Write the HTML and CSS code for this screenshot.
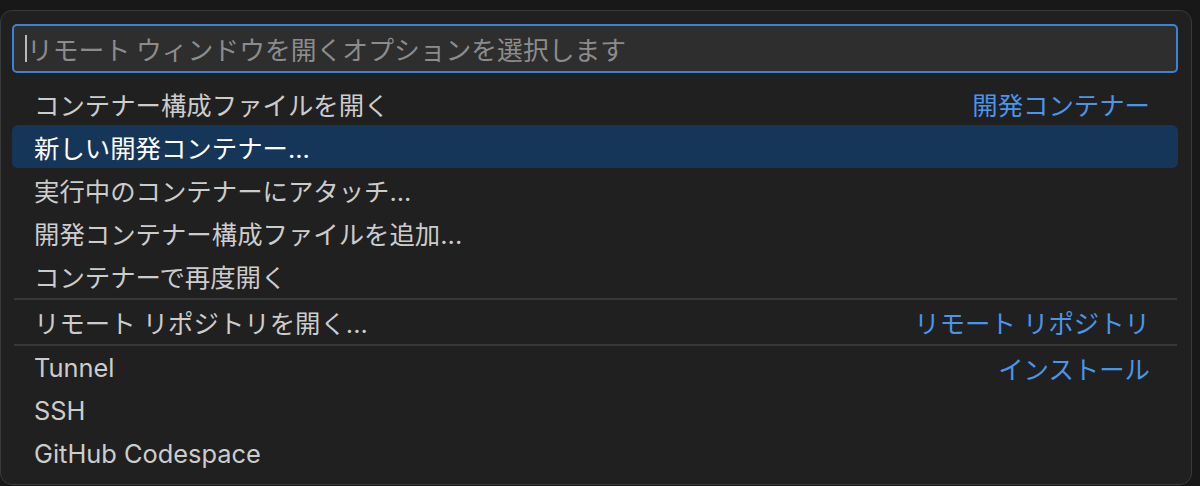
FILE: index.html
```html
<!DOCTYPE html>
<html lang="ja">

<head>
    <meta charset="UTF-8">
    <title>リモート ウィンドウを開く</title>
    <link rel="stylesheet" href="styles.css">
</head>

<body>
    <div class="picker">
        <div class="input">
            <span class="caret"></span>
            <span class="placeholder">リモート ウィンドウを開くオプションを選択します</span>
        </div>
        <div class="list">
            <div class="row">
                <span class="label">コンテナー構成ファイルを開く</span>
                <span class="group">開発コンテナー</span>
            </div>
            <div class="row active">
                <span class="label">新しい開発コンテナー...</span>
            </div>
            <div class="row">
                <span class="label">実行中のコンテナーにアタッチ...</span>
            </div>
            <div class="row">
                <span class="label">開発コンテナー構成ファイルを追加...</span>
            </div>
            <div class="row">
                <span class="label">コンテナーで再度開く</span>
            </div>
            <div class="sep"></div>
            <div class="row">
                <span class="label">リモート リポジトリを開く...</span>
                <span class="group">リモート リポジトリ</span>
            </div>
            <div class="sep"></div>
            <div class="row">
                <span class="label">Tunnel</span>
                <span class="group">インストール</span>
            </div>
            <div class="row">
                <span class="label">SSH</span>
            </div>
            <div class="row">
                <span class="label">GitHub Codespace</span>
            </div>
        </div>
    </div>
</body>

</html>
```
FILE: styles.css
```css
body {
    margin: 0;
    background-color: #181818;
    font-family: "Inter", "Noto Sans CJK JP", sans-serif;
    font-size: 25.4px;
    color: #cccccc;
    overflow: hidden;
}

.picker {
    box-sizing: border-box;
    width: 1192px;
    height: 475px;
    margin: 10px 0 0 0;
    padding: 13px 13px 0 11px;
    background-color: #202020;
    border: 1px solid #3a3a3a;
    border-radius: 12px;
}

.input {
    box-sizing: border-box;
    height: 49px;
    display: flex;
    align-items: center;
    padding-left: 11px;
    background-color: #2e2e2e;
    border: 2px solid #3b82d8;
    border-radius: 5px;
}

.caret {
    width: 2px;
    height: 27px;
    background-color: #b8b8b8;
}

.placeholder {
    color: #8c8c8c;
    font-family: "Noto Sans CJK JP", sans-serif;
    font-size: 25.8px;
}

.list {
    margin-top: 9px;
}

.row {
    height: 43px;
    display: flex;
    align-items: center;
    justify-content: space-between;
    padding: 0 28px 0 22px;
    border-radius: 6px;
}

.row.active {
    background-color: #163659;
    color: #ffffff;
}

.group {
    color: #4a95ea;
}

.sep {
    height: 2px;
    margin: 1px 1px 0 2px;
    background-color: #383838;
}
```
